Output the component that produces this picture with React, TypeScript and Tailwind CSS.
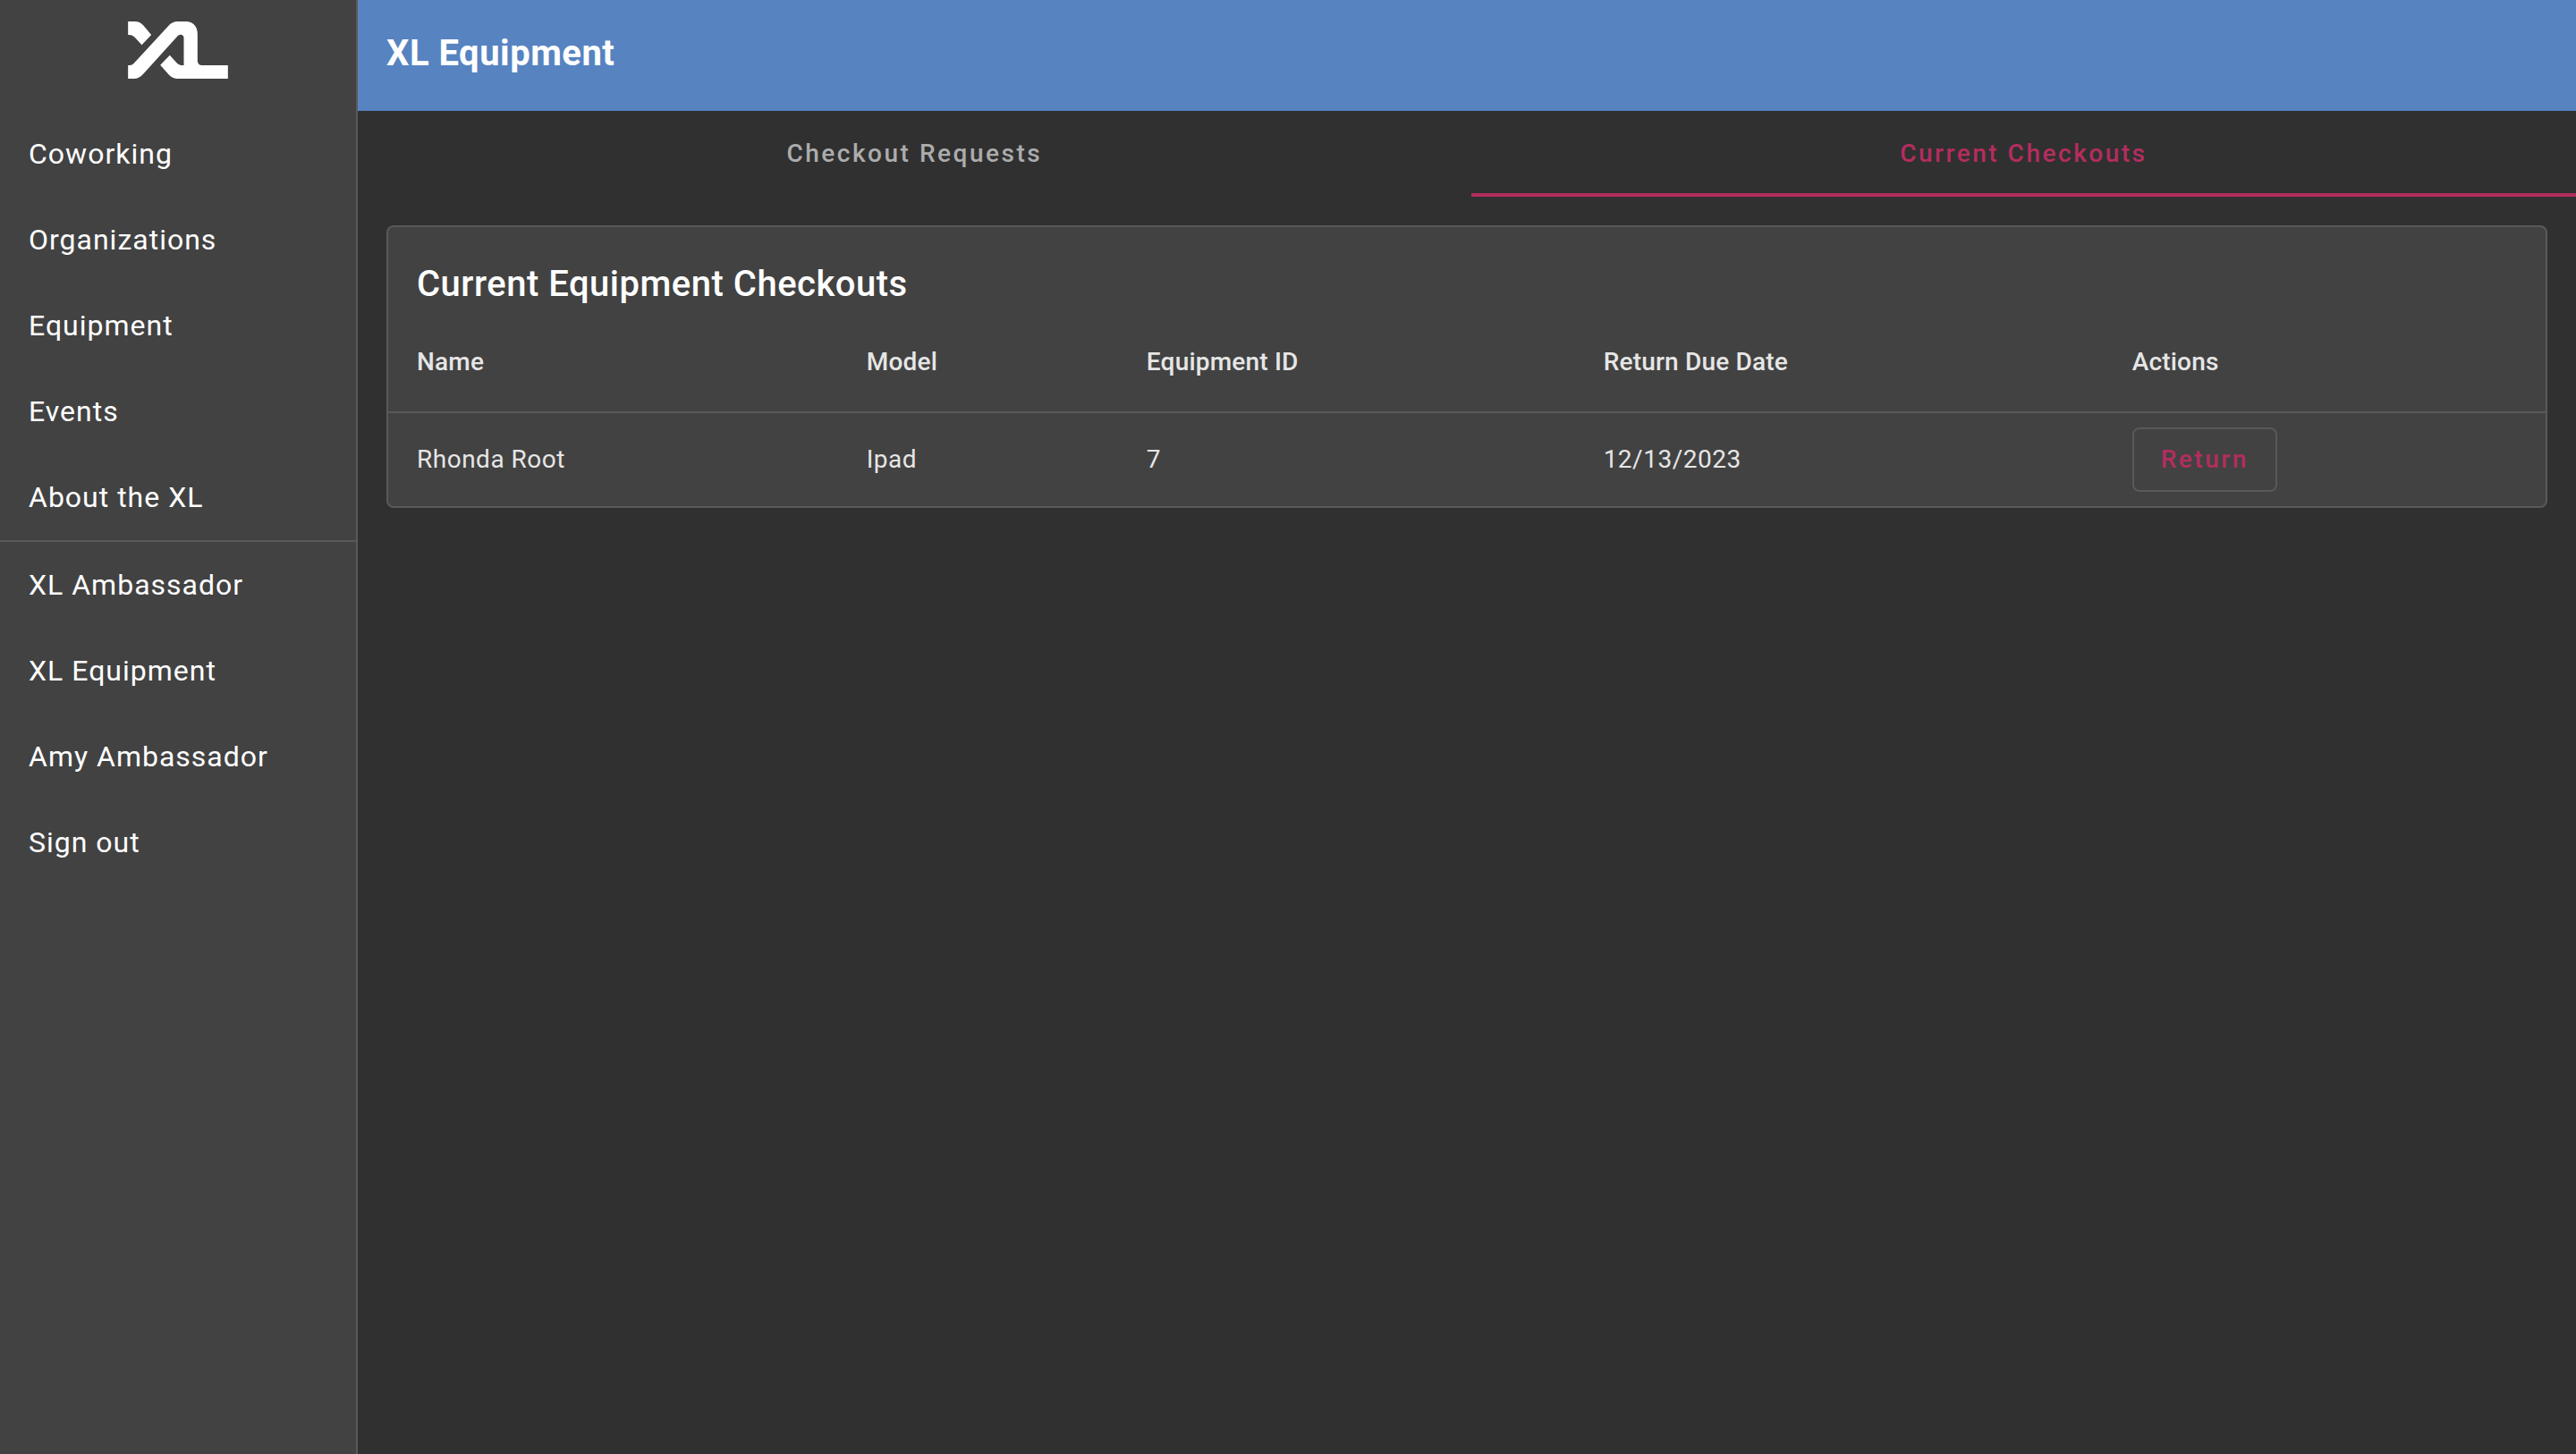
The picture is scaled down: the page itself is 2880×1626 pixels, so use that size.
import React from "react";

const primaryLinks = ["Coworking", "Organizations", "Equipment", "Events", "About the XL"];
const accountLinks = ["XL Ambassador", "XL Equipment", "Amy Ambassador", "Sign out"];

const columns = ["Name", "Model", "Equipment ID", "Return Due Date", "Actions"];
const checkouts = [{ name: "Rhonda Root", model: "Ipad", id: 7, due: "12/13/2023" }];

function Logo() {
  return (
    <svg viewBox="69 72 335 192" className="h-16 w-28" fill="#fff" role="img" aria-label="XL">
      <path d="M69 72H91Q109 72 120 85L147 117L115 151L93 127Q83 115 69 117Z" />
      <path d="M69 219H75Q82 219 88 213L205 86Q218 72 235 72H262C288 72 302 90 302 113V205Q303 219 317 219H404V264H232Q217 263 207 252L177 218L209 185L232 211Q239 219 247 219H256V127Q255 116 246 116Q240 116 236 120L122 246Q107 264 88 264H69Z" />
    </svg>
  );
}

function NavList({ items }: { items: string[] }) {
  return (
    <ul>
      {items.map((item) => (
        <li key={item}>
          <a href="#" className="flex h-24 items-center px-8 text-[32px] tracking-[1px] text-white">
            {item}
          </a>
        </li>
      ))}
    </ul>
  );
}

export default function App() {
  return (
    <div className="flex min-h-screen bg-[#303030] font-['Roboto',sans-serif] text-white antialiased">
      <aside className="w-[400px] shrink-0 border-r-2 border-[#595959] bg-[#424242]">
        <a href="#" className="flex justify-center pt-6 pb-9">
          <Logo />
        </a>
        <nav>
          <NavList items={primaryLinks} />
          <hr className="border-t-2 border-[#595959]" />
          <NavList items={accountLinks} />
        </nav>
      </aside>

      <div className="min-w-0 flex-1">
        <header className="bg-[#5783c1] px-8 pt-7 pb-8">
          <h1 className="text-[40px] leading-[64px] font-bold tracking-[0.0125em]">XL Equipment</h1>
        </header>

        <div role="tablist" className="flex text-[28px] font-medium tracking-[0.09em]">
          <button role="tab" aria-selected="false" className="h-24 flex-auto px-12 text-[#acacac]">
            Checkout Requests
          </button>
          <button
            role="tab"
            aria-selected="true"
            className="h-24 flex-auto px-12 text-[#b42d5e] shadow-[inset_0_-4px_0_#b42d5e]"
          >
            Current Checkouts
          </button>
        </div>

        <main className="p-8">
          <section className="rounded-lg border-2 border-[#595959] bg-[#424242]">
            <h2 className="px-8 pt-8 text-[40px] leading-[64px] font-medium tracking-[0.0125em]">
              Current Equipment Checkouts
            </h2>
            <table className="w-full border-separate border-spacing-0 text-left text-[28px] text-[#e6e6e6]">
              <thead>
                <tr>
                  {columns.map((column) => (
                    <th
                      key={column}
                      scope="col"
                      className="h-28 border-b-2 border-[#595959] px-8 py-0 font-medium tracking-[0.007em]"
                    >
                      {column}
                    </th>
                  ))}
                </tr>
              </thead>
              <tbody>
                {checkouts.map((row) => (
                  <tr key={row.id} className="h-[104px] tracking-[0.018em]">
                    <td className="px-8 py-0">{row.name}</td>
                    <td className="px-8 py-0">{row.model}</td>
                    <td className="px-8 py-0">{row.id}</td>
                    <td className="px-8 py-0">{row.due}</td>
                    <td className="px-8 py-0">
                      <button className="flex h-[72px] items-center rounded-lg border-2 border-[#595959] px-[30px] font-medium tracking-[0.09em] text-[#b42d5e]">
                        Return
                      </button>
                    </td>
                  </tr>
                ))}
              </tbody>
            </table>
          </section>
        </main>
      </div>
    </div>
  );
}
